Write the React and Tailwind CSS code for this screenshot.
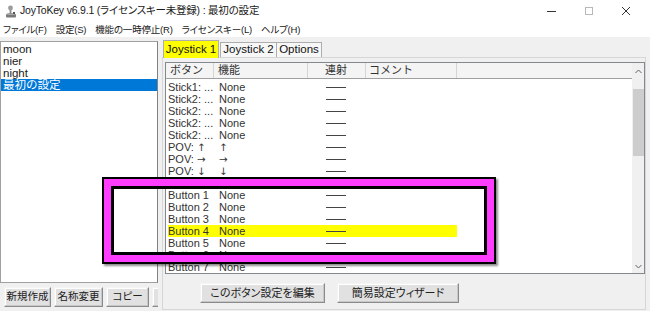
import React from "react";

const FONT = "[font-family:'Liberation_Sans','Noto_Sans_CJK_JP',sans-serif]";

const rows = [
  ["Stick1: ...", "None"],
  ["Stick2: ...", "None"],
  ["Stick2: ...", "None"],
  ["Stick2: ...", "None"],
  ["Stick2: ...", "None"],
  ["POV: ", "↑", true],
  ["POV: ", "→", true],
  ["POV: ", "↓", true],
  ["POV: ", "←", true],
  ["Button 1", "None"],
  ["Button 2", "None"],
  ["Button 3", "None"],
  ["Button 4", "None"],
  ["Button 5", "None"],
  ["Button 6", "None"],
  ["Button 7", "None"],
];

function AppIcon() {
  return (
    <svg width="12" height="13" viewBox="0 0 12 13">
      <rect x="1" y="9" width="10" height="3.5" rx="1" fill="#7a7a7a" />
      <rect x="2" y="8" width="8" height="2" rx="1" fill="#a8a8a8" />
      <rect x="4.6" y="3" width="1.8" height="6" fill="#8c8c8c" />
      <circle cx="5.5" cy="3" r="2.4" fill="#9a9a9a" />
      <rect x="8" y="7" width="2" height="2" fill="#555" />
    </svg>
  );
}

function WinButton({ children, className = "" }) {
  return (
    <div
      className={`flex items-center justify-center whitespace-nowrap bg-[#e1e1e1] border border-t-[#f4f4f4] border-l-[#f4f4f4] border-r-[#8a8a8a] border-b-[#8a8a8a] shadow-[inset_-1px_-1px_0_#c8c8c8,inset_1px_1px_0_#ffffff] text-[#222] [font-feature-settings:'palt'] ${className}`}
    >
      {children}
    </div>
  );
}

const ARROW = "[font-family:'DejaVu_Sans',sans-serif] text-[10.3px] leading-[12px]";

export default function App() {
  return (
    <div className={`w-[650px] h-[311px] bg-[#f0f0f0] relative overflow-hidden ${FONT}`}>
      {/* Title bar */}
      <div className="h-[22px] bg-white flex items-center">
        <div className="w-[20px] flex justify-center pl-[1px]">
          <AppIcon />
        </div>
        <span className="text-[10.5px] text-[#1a1a1a] [font-feature-settings:'palt'] tracking-[-0.2px]">
          JoyToKey v6.9.1 (ライセンスキー未登録) : 最初の設定
        </span>
        <div className="ml-auto flex items-center h-full">
          <div className="w-[37px] flex justify-center">
            <div className="w-[9px] h-px bg-[#333]" />
          </div>
          <div className="w-[37px] flex justify-center">
            <div className="w-[8px] h-[8px] border border-[#b8b8b8]" />
          </div>
          <div className="w-[40px] flex justify-center pr-[3px]">
            <svg width="10" height="10" viewBox="0 0 10 10">
              <path d="M1 1 L9 9 M9 1 L1 9" stroke="#333" strokeWidth="1" />
            </svg>
          </div>
          <div className="w-[3px]" />
        </div>
      </div>

      {/* Menu bar */}
      <div className="h-[14px] bg-white flex items-start gap-[9px] pl-[3px] text-[9.5px] tracking-[-0.2px] leading-[14px] text-[#1a1a1a] [font-feature-settings:'palt'] pt-[1px] box-content">
        <span>ファイル(F)</span>
        <span>設定(S)</span>
        <span>機能の一時停止(R)</span>
        <span>ライセンスキー(L)</span>
        <span>ヘルプ(H)</span>
      </div>

      {/* Body */}
      <div className="flex h-[275px]">
        {/* Left pane */}
        <div className="w-[158px] flex flex-col overflow-hidden">
          <div className="mt-[4px] h-[242px] bg-white border border-[#a0a0a0] border-r-[#828282] pt-[1px]">
            {["moon", "nier", "night"].map((t) => (
              <div key={t} className="h-[12px] leading-[12px] pl-[2px] text-[11.5px] text-[#1a1a1a]">
                {t}
              </div>
            ))}
            <div className="h-[12px] leading-[12px] pl-[2px] text-[11.5px] text-white bg-[#0078d7]">
              最初の設定
            </div>
          </div>
          <div className="flex gap-[3px] pl-[4px] mt-[4px] w-[200px]">
            <WinButton className="w-[47px] h-[20px] text-[10.5px]">新規作成</WinButton>
            <WinButton className="w-[49px] h-[20px] text-[10.5px]">名称変更</WinButton>
            <WinButton className="w-[43px] h-[20px] text-[10.5px]">コピー</WinButton>
            <WinButton className="w-[43px] h-[20px] text-[10.5px]" />
          </div>
        </div>

        {/* Right pane */}
        <div className="ml-[4px] w-[484px] flex flex-col">
          {/* Tabs */}
          <div className="flex items-end h-[20px] pl-[1px] relative z-10">
            <div className="h-[18px] w-[56px] bg-[#ffff00] border border-b-0 border-[#adadad] flex items-center justify-center text-[11.5px] text-[#111] -mb-px">
              Joystick 1
            </div>
            <div className="h-[15px] w-[57px] ml-[1px] bg-[#f7f7f7] border border-b-0 border-[#adadad] flex items-center justify-center text-[11.5px] text-[#111]">
              Joystick 2
            </div>
            <div className="h-[15px] w-[46px] -ml-px bg-[#f7f7f7] border border-b-0 border-[#adadad] flex items-center justify-center text-[11.5px] text-[#111]">
              Options
            </div>
          </div>

          {/* Tab page */}
          <div className="h-[253px] border border-[#d6d6d6] bg-[#f0f0f0] flex flex-col">
            {/* List view */}
            <div className="mt-[4px] ml-[2px] h-[212px] bg-white border border-[#828790] flex">
              <div className="flex-1 flex flex-col overflow-hidden">
                {/* Header */}
                <div className="h-[16px] shrink-0 flex bg-[#f4f4f4] border-b border-[#a0a0a0] text-[11px] text-[#333] leading-[15px]">
                  <div className="w-[48px] border-r border-[#d5d5d5] pl-[4px]">ボタン</div>
                  <div className="w-[94px] border-r border-[#d5d5d5] pl-[4px]">機能</div>
                  <div className="w-[58px] border-r border-[#d5d5d5] pl-[17px]">連射</div>
                  <div className="w-[91px] border-r border-[#d5d5d5] pl-[3px]">コメント</div>
                  <div className="flex-1" />
                </div>
                {/* Rows */}
                <div className="pt-[2px] overflow-hidden">
                  {rows.map(([a, b, arrow], i) => (
                    <div key={i} className="h-[12px] flex">
                      <div
                        className={`ml-[2px] w-[289px] h-[12px] flex items-center text-[11px] leading-[12px] text-[#333] ${
                          a === "Button 4" ? "bg-[#ffff00]" : ""
                        }`}
                      >
                        <div className="w-[51px] whitespace-nowrap">
                          {a}
                          {arrow ? <span className={ARROW}>{b}</span> : null}
                        </div>
                        <div className={`w-[107px] whitespace-nowrap ${arrow ? ARROW : ""}`}>{b}</div>
                        <div className="w-[20px] h-px bg-[#444]" />
                      </div>
                    </div>
                  ))}
                </div>
              </div>
              {/* Scrollbar */}
              <div className="w-[12px] bg-[#f0f0f0] flex flex-col items-center">
                <div className="h-[16px] flex items-center justify-center">
                  <svg width="7" height="5" viewBox="0 0 7 5">
                    <path d="M0.5 4 L3.5 1 L6.5 4" stroke="#606060" strokeWidth="1" fill="none" />
                  </svg>
                </div>
                <div className="mt-[10px] w-[11px] h-[67px] bg-[#cdcdcd]" />
                <div className="flex-1" />
                <div className="h-[14px] flex items-center justify-center">
                  <svg width="7" height="5" viewBox="0 0 7 5">
                    <path d="M0.5 1 L3.5 4 L6.5 1" stroke="#606060" strokeWidth="1" fill="none" />
                  </svg>
                </div>
              </div>
            </div>
            {/* Buttons */}
            <div className="flex gap-[12px] pl-[37px] mt-[9px]">
              <WinButton className="w-[125px] h-[20px] text-[11px]">このボタン設定を編集</WinButton>
              <WinButton className="w-[122px] h-[20px] text-[11px]">簡易設定ウィザード</WinButton>
            </div>
          </div>
        </div>
      </div>

      {/* Annotation box */}
      <div className="absolute left-[102px] top-[177px] w-[394px] h-[87px] border-2 border-black shadow-[2px_2px_2px_rgba(0,0,0,0.45)]">
        <div className="w-full h-full border-[7px] border-[#ff3dff]">
          <div className="w-full h-full border-[3px] border-black" />
        </div>
      </div>
    </div>
  );
}
